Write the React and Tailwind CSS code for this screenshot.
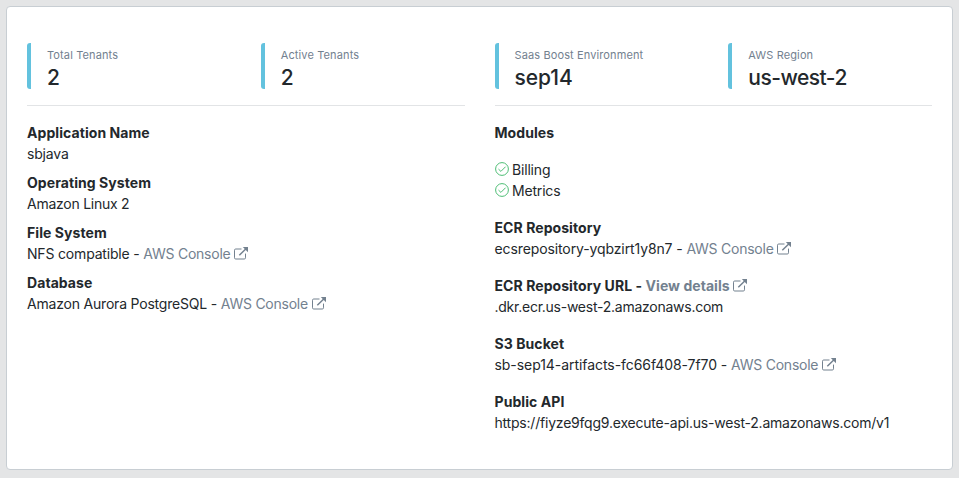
const Ext = () => (
  <svg viewBox="0 0 14 14" className="inline-block h-[14px] w-[14px] align-[-2px]" fill="none" stroke="currentColor" strokeWidth="1">
    <path d="M7.5 2H1.7A1.2 1.2 0 0 0 .5 3.2v7.6A1.2 1.2 0 0 0 1.7 12h8.6a1.2 1.2 0 0 0 1.2-1.2V6.6" />
    <path d="M5.3 8.2 12 1.8" strokeWidth="1.5" />
    <path d="M8.8 0H14v5.2Z" fill="currentColor" stroke="none" />
  </svg>
);

const Check = () => (
  <svg viewBox="0 0 14 14" className="mr-[3.5px] inline-block h-[14px] w-[14px] align-[-1px]" fill="none" stroke="#4dbd74" strokeWidth="1">
    <circle cx="7" cy="7" r="6.4" />
    <path d="m3.5 7.1 2.4 2.3 4.7-4.7" />
  </svg>
);

const Stat = ({ label, value, valueClass = "" }) => (
  <div className="h-[46px] flex-1 rounded-[3px] border-l-4 border-[#63c2de] pl-4">
    <div className="pt-[3px] text-[11px] leading-[18px] tracking-[0.12px] text-[#73818f]">{label}</div>
    <div className={`pt-px text-[21px] leading-[26px] font-medium ${valueClass}`}>{value}</div>
  </div>
);

const Link = ({ children, className = "tracking-[-0.24px]" }) => (
  <span className={`text-[#73818f] ${className}`}>{children} <Ext /></span>
);

const Item = ({ title, children, className = "tracking-[-0.18px]" }) => (
  <div>
    <div className="font-bold tracking-[0.07px]">{title}</div>
    <div className={className}>{children}</div>
  </div>
);

export default function App() {
  return (
    <div className="h-[478px] bg-[#e4e5e6] px-[6px] pt-[6px] font-['Inter',sans-serif] text-sm leading-[21px] text-[#23282c]">
      <div className="grid h-[464px] w-[947px] grid-cols-2 gap-[30px] rounded border border-[#c8ced3] bg-white px-5 pt-9 whitespace-nowrap">
        <div>
          <div className="flex gap-[30px] border-b border-[#e2e4e6] pb-4">
            <Stat label="Total Tenants" value="2" />
            <Stat label="Active Tenants" value="2" />
          </div>
          <div className="flex flex-col gap-2 pt-4">
            <Item title="Application Name">sbjava</Item>
            <Item title="Operating System" className="tracking-[-0.25px]">Amazon Linux 2</Item>
            <Item title="File System">NFS compatible - <Link>AWS Console</Link></Item>
            <Item title="Database" className="tracking-[-0.2px]">Amazon Aurora PostgreSQL - <Link>AWS Console</Link></Item>
          </div>
        </div>
        <div>
          <div className="flex gap-[30px] border-b border-[#e2e4e6] pb-4">
            <Stat label="Saas Boost Environment" value="sep14" valueClass="tracking-[-0.05px]" />
            <Stat label="AWS Region" value="us-west-2" valueClass="tracking-[-0.5px]" />
          </div>
          <div className="flex flex-col gap-4 pt-4">
            <div className="font-bold tracking-[0.07px]">Modules</div>
            <div className="tracking-[-0.18px]">
              <div><Check />Billing</div>
              <div><Check />Metrics</div>
            </div>
            <Item title="ECR Repository" className="tracking-[-0.11px]">ecsrepository-yqbzirt1y8n7 - <Link>AWS Console</Link></Item>
            <Item title={<>ECR Repository URL - <Link className="tracking-[0.05px]">View details</Link></>} className="tracking-[-0.25px]">.dkr.ecr.us-west-2.amazonaws.com</Item>
            <Item title="S3 Bucket" className="tracking-[-0.06px]">sb-sep14-artifacts-fc66f408-7f70 - <Link>AWS Console</Link></Item>
            <Item title="Public API" className="tracking-[-0.21px]">https://fiyze9fqg9.execute-api.us-west-2.amazonaws.com/v1</Item>
          </div>
        </div>
      </div>
    </div>
  );
}
